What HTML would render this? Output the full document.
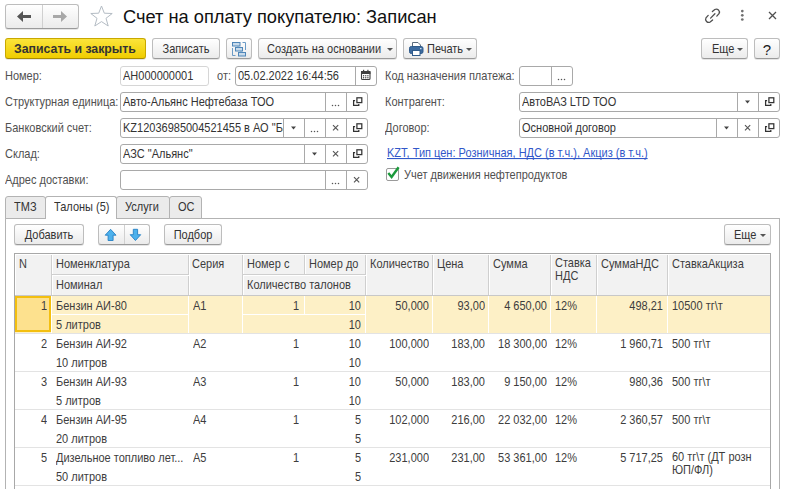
<!DOCTYPE html>
<html><head><meta charset="utf-8">
<style>
*{box-sizing:border-box;margin:0;padding:0}
html,body{width:785px;height:489px;overflow:hidden;background:#fff}
body{position:relative;font-family:"Liberation Sans",sans-serif;font-size:11px;color:#3d3d3d}
.a{position:absolute;white-space:nowrap}
.t{position:absolute;white-space:nowrap;line-height:13px;transform:scaleY(1.09);transform-origin:0 11px}
.btn{position:absolute;height:21px;border:1px solid #bdbdbd;border-bottom-color:#9a9a9a;border-radius:3px;background:linear-gradient(#ffffff,#ebebeb);box-shadow:0 1px 0 rgba(0,0,0,0.10);color:#333;line-height:20px;text-align:center}
.inp{position:absolute;height:20px;border:1px solid #a9a9a9;border-radius:3px;background:#fff;color:#333}
.inp .v{position:absolute;left:2px;top:3px;line-height:13px;white-space:nowrap;transform:scaleY(1.09);transform-origin:0 11px}
.dv{position:absolute;top:0;bottom:0;width:1px;background:#a9a9a9}
.bt{display:inline-block;transform:scaleY(1.09);transform-origin:50% 14px}
.ib{position:absolute;top:0;height:18px;width:21px}
.ib svg{position:absolute;left:0;top:0}
</style></head><body>

<!-- header -->
<div class="btn" style="left:5px;top:4px;width:74px;height:25px;border-radius:3px"></div>
<div class="a" style="left:42px;top:5px;width:1px;height:23px;background:#d0d0d0"></div>
<svg class="a" style="left:5px;top:4px" width="74" height="25" viewBox="0 0 74 25">
  <path d="M12 12.5 L18 7 L18 11 L26 11 L26 14 L18 14 L18 18 Z" fill="#555"/>
  <path d="M62 12.5 L56 7 L56 11 L48 11 L48 14 L56 14 L56 18 Z" fill="#a8a8a8"/>
</svg>
<svg class="a" style="left:89px;top:5px" width="25" height="22" viewBox="0 0 25 22">
  <path d="M12.5 1 L15.3 8.2 L23.2 8.5 L17 13.3 L19.2 21 L12.5 16.6 L5.8 21 L8 13.3 L1.8 8.5 L9.7 8.2 Z" fill="none" stroke="#b4bcc4" stroke-width="1"/>
</svg>
<div class="a" style="left:123px;top:6px;font-size:18.25px;line-height:22px;color:#111">Счет на оплату покупателю: Записан</div>

<svg class="a" style="left:704px;top:7px" width="17" height="17" viewBox="0 0 17 17">
  <g fill="none" stroke="#505050" stroke-width="1.3" stroke-linecap="round">
  <path d="M8.4 4.6 L10.8 2.5 A3.1 3.1 0 0 1 15 6.7 L12.8 9.1"/>
  <path d="M8.6 12.9 L6.2 15 A3.1 3.1 0 0 1 2 10.8 L4.2 8.4"/>
  <path d="M6.6 11.1 L10.9 6.8"/>
  </g>
</svg>
<svg class="a" style="left:740px;top:9px" width="5" height="13" viewBox="0 0 5 13">
  <circle cx="2.3" cy="2.1" r="1.35" fill="#707070"/><circle cx="2.3" cy="6.3" r="1.35" fill="#707070"/><circle cx="2.3" cy="10.5" r="1.35" fill="#707070"/>
</svg>
<svg class="a" style="left:768px;top:11px" width="10" height="10" viewBox="0 0 10 10">
  <path d="M1 1 L8 8 M8 1 L1 8" stroke="#505050" stroke-width="1.3"/>
</svg>

<!-- toolbar -->
<div class="btn" style="left:5px;top:38px;width:141px;border-color:#c8a800;border-bottom-color:#a88c00;background:linear-gradient(#fbe43a,#f0cd00);color:#333;font-weight:bold;font-size:12.3px;padding-right:1px">Записать и закрыть</div>
<div class="btn" style="left:152px;top:38px;width:68px"><span class="bt">Записать</span></div>
<div class="btn" style="left:226px;top:38px;width:26px"></div>
<svg class="a" style="left:231px;top:41px" width="17" height="16" viewBox="0 0 17 16">
 <g stroke="#4f86b8" stroke-width="1" fill="#c9dbeb">
  <rect x="1.5" y="1.5" width="7.5" height="3.5"/>
  <rect x="4.5" y="6.5" width="7" height="3.5"/>
  <rect x="7.5" y="11.5" width="7" height="3.5"/>
  <path d="M7 5 V6.5 M10 10 V11.5 M11.5 1.5 H14.5 V9 M1.5 7 V14.5 H4.5" fill="none" stroke="#6b9bc6"/>
 </g>
</svg>
<div class="btn" style="left:258px;top:38px;width:139px;text-align:left;padding-left:8px"><span class="bt">Создать на основании</span></div>
<svg class="a" style="left:387px;top:48px" width="6" height="3"><path d="M0 0H6L3 3Z" fill="#555"/></svg>
<div class="btn" style="left:403px;top:38px;width:74px;text-align:left;padding-left:23px"><span class="bt">Печать</span></div>
<svg class="a" style="left:409px;top:42px" width="15" height="14" viewBox="0 0 15 14">
  <path d="M3.5 0.5 H9 L11.5 3 V5 H3.5 Z" fill="#fff" stroke="#5a6b7c"/>
  <rect x="0.5" y="4.5" width="13.5" height="7" rx="1.8" fill="#3d6b9f" stroke="#2f5a8a"/>
  <rect x="11" y="6" width="1.5" height="1.2" fill="#cfe0f0"/>
  <rect x="3.5" y="8.5" width="7.5" height="5" fill="#fff" stroke="#2f5a8a"/>
</svg>
<svg class="a" style="left:466px;top:48px" width="6" height="3"><path d="M0 0H6L3 3Z" fill="#555"/></svg>
<div class="btn" style="left:701px;top:38px;width:47px;text-align:left;padding-left:10px"><span class="bt">Еще</span></div>
<svg class="a" style="left:737px;top:48px" width="6" height="3"><path d="M0 0H6L3 3Z" fill="#555"/></svg>
<div class="btn" style="left:754px;top:38px;width:26px;font-size:15px;color:#1a1a1a;line-height:21px">?</div>

<!-- form -->
<div class="t" style="left:5px;top:70px;color:#505050">Номер:</div>
<div class="inp" style="left:120px;top:66px;width:89px;border-color:#d6d6d6"><span class="v" style="width:85px;overflow:hidden">АН000000001</span></div>
<div class="t" style="left:217px;top:70px;color:#505050">от:</div>
<div class="inp" style="left:235px;top:66px;width:142px;border-color:#a9a9a9"><span class="v" style="width:117px;overflow:hidden">05.02.2022 16:44:56</span><div class="dv" style="left:119px"></div><svg class="a" style="left:120px;top:0" width="21" height="18" viewBox="0 0 21 18"><rect x="5.5" y="4.5" width="8.5" height="8" rx="1" fill="#fff" stroke="#404040" stroke-width="1.1"/><rect x="5" y="4" width="9.5" height="3" fill="#404040"/><rect x="7" y="2.8" width="1.2" height="1.6" fill="#404040"/><rect x="11.3" y="2.8" width="1.2" height="1.6" fill="#404040"/><circle cx="7.6" cy="8.8" r="0.7" fill="#404040"/><circle cx="9.75" cy="8.8" r="0.7" fill="#404040"/><circle cx="11.9" cy="8.8" r="0.7" fill="#404040"/><circle cx="7.6" cy="10.8" r="0.7" fill="#404040"/><circle cx="9.75" cy="10.8" r="0.7" fill="#404040"/><circle cx="11.9" cy="10.8" r="0.7" fill="#404040"/></svg></div>
<div class="t" style="left:5px;top:96px;color:#505050">Структурная единица:</div>
<div class="inp" style="left:120px;top:92px;width:248px;border-color:#a9a9a9"><span class="v" style="width:202px;overflow:hidden">Авто-Альянс Нефтебаза ТОО</span><div class="dv" style="left:204px"></div><svg class="a" style="left:205px;top:0" width="21" height="18" viewBox="0 0 21 18"><circle cx="6.5" cy="12.4" r="0.75" fill="#555"/><circle cx="9.5" cy="12.4" r="0.75" fill="#555"/><circle cx="12.5" cy="12.4" r="0.75" fill="#555"/></svg><div class="dv" style="left:225px"></div><svg class="a" style="left:226px;top:0" width="21" height="18" viewBox="0 0 21 18"><rect x="9.9" y="4.8" width="4.9" height="4.8" fill="none" stroke="#333" stroke-width="1.25"/><path d="M8.1 7.5 H6.6 V12.3 H11.8 V10.9" fill="none" stroke="#333" stroke-width="1.25"/></svg></div>
<div class="t" style="left:5px;top:122px;color:#505050">Банковский счет:</div>
<div class="inp" style="left:120px;top:118px;width:248px;border-color:#a9a9a9"><span class="v" style="width:160px;overflow:hidden">KZ12036985004521455 в АО "Банк</span><div class="dv" style="left:162px"></div><svg class="a" style="left:163px;top:0" width="21" height="18" viewBox="0 0 21 18"><path d="M7 7.5 H12 L9.5 10.5 Z" fill="#444"/></svg><div class="dv" style="left:183px"></div><svg class="a" style="left:184px;top:0" width="21" height="18" viewBox="0 0 21 18"><circle cx="6.5" cy="12.4" r="0.75" fill="#555"/><circle cx="9.5" cy="12.4" r="0.75" fill="#555"/><circle cx="12.5" cy="12.4" r="0.75" fill="#555"/></svg><div class="dv" style="left:204px"></div><svg class="a" style="left:205px;top:0" width="21" height="18" viewBox="0 0 21 18"><path d="M7 6.2 L12.2 11.4 M12.2 6.2 L7 11.4" stroke="#555" stroke-width="1.15"/></svg><div class="dv" style="left:225px"></div><svg class="a" style="left:226px;top:0" width="21" height="18" viewBox="0 0 21 18"><rect x="9.9" y="4.8" width="4.9" height="4.8" fill="none" stroke="#333" stroke-width="1.25"/><path d="M8.1 7.5 H6.6 V12.3 H11.8 V10.9" fill="none" stroke="#333" stroke-width="1.25"/></svg></div>
<div class="t" style="left:5px;top:148px;color:#505050">Склад:</div>
<div class="inp" style="left:120px;top:144px;width:248px;border-color:#a9a9a9"><span class="v" style="width:181px;overflow:hidden">АЗС "Альянс"</span><div class="dv" style="left:183px"></div><svg class="a" style="left:184px;top:0" width="21" height="18" viewBox="0 0 21 18"><path d="M7 7.5 H12 L9.5 10.5 Z" fill="#444"/></svg><div class="dv" style="left:204px"></div><svg class="a" style="left:205px;top:0" width="21" height="18" viewBox="0 0 21 18"><path d="M7 6.2 L12.2 11.4 M12.2 6.2 L7 11.4" stroke="#555" stroke-width="1.15"/></svg><div class="dv" style="left:225px"></div><svg class="a" style="left:226px;top:0" width="21" height="18" viewBox="0 0 21 18"><rect x="9.9" y="4.8" width="4.9" height="4.8" fill="none" stroke="#333" stroke-width="1.25"/><path d="M8.1 7.5 H6.6 V12.3 H11.8 V10.9" fill="none" stroke="#333" stroke-width="1.25"/></svg></div>
<div class="t" style="left:5px;top:174px;color:#505050">Адрес доставки:</div>
<div class="inp" style="left:120px;top:170px;width:248px;border-color:#a9a9a9"><div class="dv" style="left:204px"></div><svg class="a" style="left:205px;top:0" width="21" height="18" viewBox="0 0 21 18"><circle cx="6.5" cy="12.4" r="0.75" fill="#555"/><circle cx="9.5" cy="12.4" r="0.75" fill="#555"/><circle cx="12.5" cy="12.4" r="0.75" fill="#555"/></svg><div class="dv" style="left:225px"></div><svg class="a" style="left:226px;top:0" width="21" height="18" viewBox="0 0 21 18"><path d="M7 6.2 L12.2 11.4 M12.2 6.2 L7 11.4" stroke="#555" stroke-width="1.15"/></svg></div>
<div class="t" style="left:385px;top:70px;color:#505050">Код назначения платежа:</div>
<div class="inp" style="left:519px;top:66px;width:54px;border-color:#a9a9a9"><div class="dv" style="left:31px"></div><svg class="a" style="left:32px;top:0" width="21" height="18" viewBox="0 0 21 18"><circle cx="6.5" cy="12.4" r="0.75" fill="#555"/><circle cx="9.5" cy="12.4" r="0.75" fill="#555"/><circle cx="12.5" cy="12.4" r="0.75" fill="#555"/></svg></div>
<div class="t" style="left:385px;top:96px;color:#505050">Контрагент:</div>
<div class="inp" style="left:519px;top:92px;width:261px;border-color:#a9a9a9"><span class="v" style="width:215px;overflow:hidden">АвтоВАЗ LTD ТОО</span><div class="dv" style="left:217px"></div><svg class="a" style="left:218px;top:0" width="21" height="18" viewBox="0 0 21 18"><path d="M7 7.5 H12 L9.5 10.5 Z" fill="#444"/></svg><div class="dv" style="left:238px"></div><svg class="a" style="left:239px;top:0" width="21" height="18" viewBox="0 0 21 18"><rect x="9.9" y="4.8" width="4.9" height="4.8" fill="none" stroke="#333" stroke-width="1.25"/><path d="M8.1 7.5 H6.6 V12.3 H11.8 V10.9" fill="none" stroke="#333" stroke-width="1.25"/></svg></div>
<div class="t" style="left:385px;top:122px;color:#505050">Договор:</div>
<div class="inp" style="left:519px;top:118px;width:261px;border-color:#a9a9a9"><span class="v" style="width:194px;overflow:hidden">Основной договор</span><div class="dv" style="left:196px"></div><svg class="a" style="left:197px;top:0" width="21" height="18" viewBox="0 0 21 18"><path d="M7 7.5 H12 L9.5 10.5 Z" fill="#444"/></svg><div class="dv" style="left:217px"></div><svg class="a" style="left:218px;top:0" width="21" height="18" viewBox="0 0 21 18"><path d="M7 6.2 L12.2 11.4 M12.2 6.2 L7 11.4" stroke="#555" stroke-width="1.15"/></svg><div class="dv" style="left:238px"></div><svg class="a" style="left:239px;top:0" width="21" height="18" viewBox="0 0 21 18"><rect x="9.9" y="4.8" width="4.9" height="4.8" fill="none" stroke="#333" stroke-width="1.25"/><path d="M8.1 7.5 H6.6 V12.3 H11.8 V10.9" fill="none" stroke="#333" stroke-width="1.25"/></svg></div>
<div class="t" style="left:387px;top:147px;color:#3157c9;text-decoration:underline;text-decoration-skip-ink:none">KZT, Тип цен: Розничная, НДС (в т.ч.), Акциз (в т.ч.)</div>
<div class="a" style="left:386px;top:168px;width:13px;height:13px;border:1px solid #9a9a9a;border-radius:2px;background:#fff"></div>
<svg class="a" style="left:386px;top:165px" width="14" height="16" viewBox="0 0 14 16"><path d="M2.3 8 L5.6 12 L12.6 2.3" fill="none" stroke="#1c9a3c" stroke-width="2.4"/></svg>
<div class="t" style="left:404px;top:169px;color:#505050">Учет движения нефтепродуктов</div>

<!-- tabs -->
<div class="a" style="left:5px;top:218px;width:775px;height:280px;border:1px solid #b3b3b3;border-bottom:none"></div>
<div class="a" style="left:5px;top:196px;width:41px;height:23px;border:1px solid #b3b3b3;border-radius:3px 3px 0 0;background:#ebebeb"></div>
<div class="a" style="left:116px;top:196px;width:54px;height:23px;border:1px solid #b3b3b3;border-radius:3px 3px 0 0;background:#ebebeb"></div>
<div class="a" style="left:169px;top:196px;width:33px;height:23px;border:1px solid #b3b3b3;border-radius:3px 3px 0 0;background:#ebebeb"></div>
<div class="a" style="left:45px;top:196px;width:72px;height:23px;border:1px solid #b3b3b3;border-bottom:none;border-radius:3px 3px 0 0;background:#fff"></div>
<div class="t" style="left:14px;top:201px;color:#333">ТМЗ</div>
<div class="t" style="left:54px;top:201px;color:#333">Талоны (5)</div>
<div class="t" style="left:125px;top:201px;color:#333">Услуги</div>
<div class="t" style="left:178px;top:201px;color:#333">ОС</div>
<!-- table toolbar -->
<div class="btn" style="left:14px;top:224px;width:70px"><span class="bt">Добавить</span></div>
<div class="btn" style="left:98px;top:224px;width:52px"></div>
<div class="a" style="left:124px;top:225px;width:1px;height:19px;background:#d0d0d0"></div>
<svg class="a" style="left:103px;top:228px" width="15" height="14" viewBox="0 0 15 14"><path d="M7.6 1.3 L13 7.2 L10.1 7.2 L10.1 12.5 L5.1 12.5 L5.1 7.2 L2.2 7.2 Z" fill="#4db1ec" stroke="#2680c4" stroke-width="0.9" stroke-linejoin="round"/></svg>
<svg class="a" style="left:129px;top:228px" width="15" height="14" viewBox="0 0 15 14"><path d="M4.3 1.3 H8.6 V6.7 H11.7 L6.45 12.5 L1.2 6.7 H4.3 Z" fill="#4db1ec" stroke="#2680c4" stroke-width="0.9" stroke-linejoin="round"/></svg>
<div class="btn" style="left:164px;top:224px;width:58px"><span class="bt">Подбор</span></div>
<div class="btn" style="left:724px;top:224px;width:47px;text-align:left;padding-left:9px"><span class="bt">Еще</span></div>
<svg class="a" style="left:760px;top:234px" width="6" height="3"><path d="M0 0H6L3 3Z" fill="#555"/></svg>
<div class="a" style="left:14px;top:253px;width:757px;height:43px;background:#f2f2f2;border:1px solid #a8a8a8;border-bottom-color:#c8c8c8"></div>
<div class="a" style="left:51px;top:254px;width:1px;height:41px;background:#cfcfcf"></div>
<div class="a" style="left:52px;top:254px;width:1px;height:41px;background:#fff"></div>
<div class="a" style="left:188px;top:254px;width:1px;height:41px;background:#cfcfcf"></div>
<div class="a" style="left:189px;top:254px;width:1px;height:41px;background:#fff"></div>
<div class="a" style="left:242px;top:254px;width:1px;height:41px;background:#cfcfcf"></div>
<div class="a" style="left:243px;top:254px;width:1px;height:41px;background:#fff"></div>
<div class="a" style="left:365px;top:254px;width:1px;height:41px;background:#cfcfcf"></div>
<div class="a" style="left:366px;top:254px;width:1px;height:41px;background:#fff"></div>
<div class="a" style="left:432px;top:254px;width:1px;height:41px;background:#cfcfcf"></div>
<div class="a" style="left:433px;top:254px;width:1px;height:41px;background:#fff"></div>
<div class="a" style="left:488px;top:254px;width:1px;height:41px;background:#cfcfcf"></div>
<div class="a" style="left:489px;top:254px;width:1px;height:41px;background:#fff"></div>
<div class="a" style="left:550px;top:254px;width:1px;height:41px;background:#cfcfcf"></div>
<div class="a" style="left:551px;top:254px;width:1px;height:41px;background:#fff"></div>
<div class="a" style="left:596px;top:254px;width:1px;height:41px;background:#cfcfcf"></div>
<div class="a" style="left:597px;top:254px;width:1px;height:41px;background:#fff"></div>
<div class="a" style="left:667px;top:254px;width:1px;height:41px;background:#cfcfcf"></div>
<div class="a" style="left:668px;top:254px;width:1px;height:41px;background:#fff"></div>
<div class="a" style="left:304px;top:254px;width:1px;height:20px;background:#cfcfcf"></div>
<div class="a" style="left:305px;top:254px;width:1px;height:20px;background:#fff"></div>
<div class="a" style="left:52px;top:274px;width:137px;height:1px;background:#cfcfcf"></div>
<div class="a" style="left:52px;top:275px;width:137px;height:1px;background:#fff"></div>
<div class="a" style="left:243px;top:274px;width:123px;height:1px;background:#cfcfcf"></div>
<div class="a" style="left:243px;top:275px;width:123px;height:1px;background:#fff"></div>
<div class="a" style="left:15px;top:254px;width:755px;height:1px;background:#fff"></div>
<div class="a" style="left:15px;top:254px;width:1px;height:41px;background:#fff"></div>
<div class="t" style="left:19px;top:258px;">N</div>
<div class="t" style="left:56px;top:258px;">Номенклатура</div>
<div class="t" style="left:192px;top:258px;">Серия</div>
<div class="t" style="left:247px;top:258px;">Номер с</div>
<div class="t" style="left:309px;top:258px;">Номер до</div>
<div class="t" style="left:370px;top:258px;">Количество</div>
<div class="t" style="left:437px;top:258px;">Цена</div>
<div class="t" style="left:493px;top:258px;">Сумма</div>
<div class="t" style="left:555px;top:258px;line-height:11.5px">Ставка<br>НДС</div>
<div class="t" style="left:601px;top:258px;">СуммаНДС</div>
<div class="t" style="left:672px;top:258px;">СтавкаАкциза</div>
<div class="t" style="left:56px;top:279px;">Номинал</div>
<div class="t" style="left:247px;top:279px;">Количество талонов</div>
<div class="a" style="left:15px;top:296px;width:755px;height:37px;background:#fdf0c6"></div>
<div class="a" style="left:51px;top:296px;width:1px;height:37px;background:#fff"></div>
<div class="a" style="left:188px;top:296px;width:1px;height:37px;background:#fff"></div>
<div class="a" style="left:242px;top:296px;width:1px;height:37px;background:#fff"></div>
<div class="a" style="left:365px;top:296px;width:1px;height:37px;background:#fff"></div>
<div class="a" style="left:432px;top:296px;width:1px;height:37px;background:#fff"></div>
<div class="a" style="left:488px;top:296px;width:1px;height:37px;background:#fff"></div>
<div class="a" style="left:550px;top:296px;width:1px;height:37px;background:#fff"></div>
<div class="a" style="left:596px;top:296px;width:1px;height:37px;background:#fff"></div>
<div class="a" style="left:667px;top:296px;width:1px;height:37px;background:#fff"></div>
<div class="a" style="left:304px;top:296px;width:1px;height:18px;background:#fff"></div>
<div class="a" style="left:52px;top:314px;width:136px;height:1px;background:#fff"></div>
<div class="a" style="left:243px;top:314px;width:122px;height:1px;background:#fff"></div>
<div class="a" style="left:15px;top:296px;width:36px;height:36px;background:#fde18e;border:2px solid #f3bf10"></div>
<div class="a" style="left:15px;top:333px;width:755px;height:1px;background:#e3e3e3"></div>
<div class="t" style="right:738px;top:300px;">1</div>
<div class="t" style="left:56px;top:300px;">Бензин АИ-80</div>
<div class="t" style="left:56px;top:319px;">5 литров</div>
<div class="t" style="left:193px;top:300px;">A1</div>
<div class="t" style="right:486px;top:300px;">1</div>
<div class="t" style="right:424px;top:300px;">10</div>
<div class="t" style="right:424px;top:319px;">10</div>
<div class="t" style="right:356px;top:300px;">50,000</div>
<div class="t" style="right:300px;top:300px;">93,00</div>
<div class="t" style="right:238px;top:300px;">4 650,00</div>
<div class="t" style="left:555px;top:300px;">12%</div>
<div class="t" style="right:122px;top:300px;">498,21</div>
<div class="t" style="left:672px;top:300px;">10500 тг\т</div>
<div class="a" style="left:15px;top:371px;width:755px;height:1px;background:#e3e3e3"></div>
<div class="t" style="right:738px;top:338px;">2</div>
<div class="t" style="left:56px;top:338px;">Бензин АИ-92</div>
<div class="t" style="left:56px;top:357px;">10 литров</div>
<div class="t" style="left:193px;top:338px;">A2</div>
<div class="t" style="right:486px;top:338px;">1</div>
<div class="t" style="right:424px;top:338px;">10</div>
<div class="t" style="right:424px;top:357px;">10</div>
<div class="t" style="right:356px;top:338px;">100,000</div>
<div class="t" style="right:300px;top:338px;">183,00</div>
<div class="t" style="right:238px;top:338px;">18 300,00</div>
<div class="t" style="left:555px;top:338px;">12%</div>
<div class="t" style="right:122px;top:338px;">1 960,71</div>
<div class="t" style="left:672px;top:338px;">500 тг\т</div>
<div class="a" style="left:15px;top:409px;width:755px;height:1px;background:#e3e3e3"></div>
<div class="t" style="right:738px;top:376px;">3</div>
<div class="t" style="left:56px;top:376px;">Бензин АИ-93</div>
<div class="t" style="left:56px;top:395px;">5 литров</div>
<div class="t" style="left:193px;top:376px;">A3</div>
<div class="t" style="right:486px;top:376px;">1</div>
<div class="t" style="right:424px;top:376px;">10</div>
<div class="t" style="right:424px;top:395px;">10</div>
<div class="t" style="right:356px;top:376px;">50,000</div>
<div class="t" style="right:300px;top:376px;">183,00</div>
<div class="t" style="right:238px;top:376px;">9 150,00</div>
<div class="t" style="left:555px;top:376px;">12%</div>
<div class="t" style="right:122px;top:376px;">980,36</div>
<div class="t" style="left:672px;top:376px;">500 тг\т</div>
<div class="a" style="left:15px;top:447px;width:755px;height:1px;background:#e3e3e3"></div>
<div class="t" style="right:738px;top:414px;">4</div>
<div class="t" style="left:56px;top:414px;">Бензин АИ-95</div>
<div class="t" style="left:56px;top:433px;">20 литров</div>
<div class="t" style="left:193px;top:414px;">A4</div>
<div class="t" style="right:486px;top:414px;">1</div>
<div class="t" style="right:424px;top:414px;">5</div>
<div class="t" style="right:424px;top:433px;">5</div>
<div class="t" style="right:356px;top:414px;">102,000</div>
<div class="t" style="right:300px;top:414px;">216,00</div>
<div class="t" style="right:238px;top:414px;">22 032,00</div>
<div class="t" style="left:555px;top:414px;">12%</div>
<div class="t" style="right:122px;top:414px;">2 360,57</div>
<div class="t" style="left:672px;top:414px;">500 тг\т</div>
<div class="a" style="left:15px;top:485px;width:755px;height:1px;background:#e3e3e3"></div>
<div class="t" style="right:738px;top:452px;">5</div>
<div class="t" style="left:56px;top:452px;">Дизельное топливо лет...</div>
<div class="t" style="left:56px;top:471px;">50 литров</div>
<div class="t" style="left:193px;top:452px;">A5</div>
<div class="t" style="right:486px;top:452px;">1</div>
<div class="t" style="right:424px;top:452px;">5</div>
<div class="t" style="right:424px;top:471px;">5</div>
<div class="t" style="right:356px;top:452px;">231,000</div>
<div class="t" style="right:300px;top:452px;">231,00</div>
<div class="t" style="right:238px;top:452px;">53 361,00</div>
<div class="t" style="left:555px;top:452px;">12%</div>
<div class="t" style="right:122px;top:452px;">5 717,25</div>
<div class="t" style="left:672px;top:452px;line-height:11.5px">60 тг\т (ДТ розн<br>ЮП/ФЛ)</div>
<div class="a" style="left:14px;top:253px;width:1px;height:236px;background:#a8a8a8"></div>
<div class="a" style="left:770px;top:253px;width:1px;height:236px;background:#a8a8a8"></div>
</body></html>
